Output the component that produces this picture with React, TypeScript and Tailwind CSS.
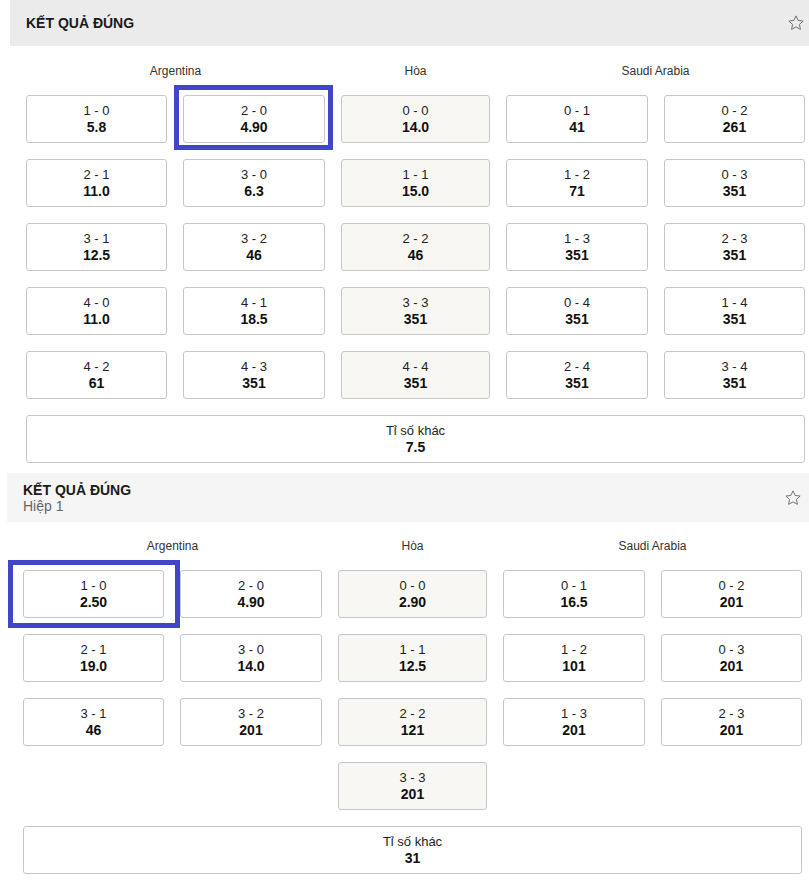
type Cell = { s: string; o: string; draw?: boolean } | null;

function StarIcon() {
  return (
    <svg viewBox="0 0 24 24" className="w-[18px] h-[18px]" fill="none" stroke="#6f6f6f" strokeWidth="1.3" strokeLinejoin="miter">
      <polygon points="12,2.5 14.9,8.6 21.5,9.4 16.6,13.9 17.9,20.5 12,17.2 6.1,20.5 7.4,13.9 2.5,9.4 9.1,8.6" />
    </svg>
  );
}

function OddCard({ s, o, draw }: { s: string; o: string; draw?: boolean }) {
  return (
    <div
      className={`h-[48px] rounded-[3px] border border-[#c6c6c6] flex flex-col items-center justify-center ${
        draw ? "bg-[#f8f7f3]" : "bg-white"
      }`}
    >
      <div className="text-[13px] leading-[16px] text-[#222]">{s}</div>
      <div className="text-[14px] leading-[16px] font-bold text-[#111]">{o}</div>
    </div>
  );
}

const cols = "grid grid-cols-[141px_142px_149px_142px_141px] gap-x-4";

function Market({ rows, other }: { rows: Cell[][]; other: string }) {
  return (
    <>
      <div className={`${cols} h-[18px] text-[12px] leading-[18px] text-[#333]`}>
        <div className="col-span-2 text-center">Argentina</div>
        <div className="text-center">Hòa</div>
        <div className="col-span-2 text-center">Saudi Arabia</div>
      </div>
      <div className={`${cols} gap-y-4 mt-[15px]`}>
        {rows.flat().map((c, i) =>
          c ? <OddCard key={i} s={c.s} o={c.o} draw={c.draw} /> : <div key={i} />
        )}
        <div className="col-span-5 h-[48px] rounded-[3px] border border-[#c6c6c6] flex flex-col items-center justify-center">
          <div className="text-[13px] leading-[16px] text-[#222]">Tỉ số khác</div>
          <div className="text-[14px] leading-[16px] font-bold text-[#111]">{other}</div>
        </div>
      </div>
    </>
  );
}

const c = (s: string, o: string, draw = false): Cell => ({ s, o, draw });

const full: Cell[][] = [
  [c("1 - 0", "5.8"), c("2 - 0", "4.90"), c("0 - 0", "14.0", true), c("0 - 1", "41"), c("0 - 2", "261")],
  [c("2 - 1", "11.0"), c("3 - 0", "6.3"), c("1 - 1", "15.0", true), c("1 - 2", "71"), c("0 - 3", "351")],
  [c("3 - 1", "12.5"), c("3 - 2", "46"), c("2 - 2", "46", true), c("1 - 3", "351"), c("2 - 3", "351")],
  [c("4 - 0", "11.0"), c("4 - 1", "18.5"), c("3 - 3", "351", true), c("0 - 4", "351"), c("1 - 4", "351")],
  [c("4 - 2", "61"), c("4 - 3", "351"), c("4 - 4", "351", true), c("2 - 4", "351"), c("3 - 4", "351")],
];

const half: Cell[][] = [
  [c("1 - 0", "2.50"), c("2 - 0", "4.90"), c("0 - 0", "2.90", true), c("0 - 1", "16.5"), c("0 - 2", "201")],
  [c("2 - 1", "19.0"), c("3 - 0", "14.0"), c("1 - 1", "12.5", true), c("1 - 2", "101"), c("0 - 3", "201")],
  [c("3 - 1", "46"), c("3 - 2", "201"), c("2 - 2", "121", true), c("1 - 3", "201"), c("2 - 3", "201")],
  [null, null, c("3 - 3", "201", true), null, null],
];

export default function App() {
  return (
    <div
      className="relative w-[809px] h-[895px] overflow-hidden bg-white"
      style={{ fontFamily: '"Liberation Sans", Arial, sans-serif' }}
    >
      {/* Full match */}
      <section className="ml-[10px]">
        <div className="h-[46px] bg-[#ebebeb] flex items-center justify-between pl-[16px] pr-[4px]">
          <h2 className="text-[14px] font-bold text-[#1a1a1a]">KẾT QUẢ ĐÚNG</h2>
          <StarIcon />
        </div>
        <div className="pl-[16px] pr-[4px] pt-[16px]">
          <Market rows={full} other="7.5" />
        </div>
      </section>

      {/* First half */}
      <section className="ml-[7px] mt-[10px]">
        <div className="h-[49px] bg-[#f5f5f5] flex items-center justify-between pl-[16px] pr-[7px]">
          <div>
            <h2 className="text-[14px] leading-[16px] font-bold text-[#1a1a1a]">KẾT QUẢ ĐÚNG</h2>
            <div className="text-[14px] leading-[16px] text-[#666]">Hiệp 1</div>
          </div>
          <StarIcon />
        </div>
        <div className="pl-[16px] pr-[7px] pt-[15px]">
          <Market rows={half} other="31" />
        </div>
      </section>

      {/* highlight overlays */}
      <div className="absolute left-[174px] top-[85px] w-[159px] h-[65px] border-[5px] border-[#4146c8]" />
      <div className="absolute left-[8px] top-[560px] w-[172px] h-[68px] border-[5px] border-[#4146c8]" />
    </div>
  );
}
